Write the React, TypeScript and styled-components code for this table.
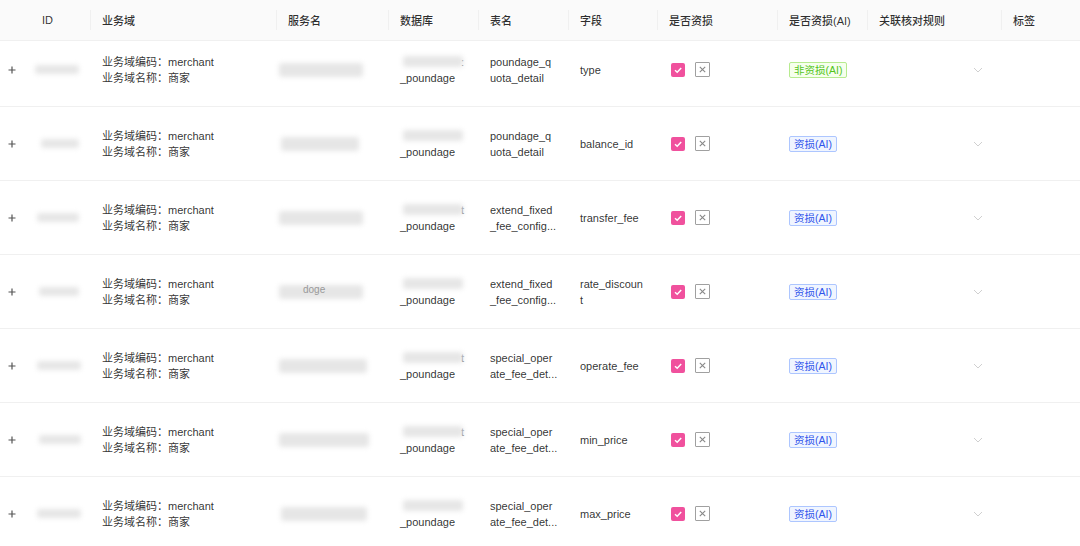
import React from "react";
import styled, { createGlobalStyle } from "styled-components";

const GlobalStyle = createGlobalStyle`
  html, body { margin: 0; padding: 0; background: #fff; }
  body {
    font-family: "Liberation Sans", "Noto Sans CJK SC", sans-serif;
    -webkit-font-smoothing: antialiased;
  }
`;

const COLS = "30px 60px 186px 112px 90px 90px 89px 120px 90px 134px 1fr";

const Table = styled.div`
  width: 1080px;
  overflow: hidden;
  font-size: 11px;
  color: rgba(0, 0, 0, 0.82);
`;

const HeaderRow = styled.div`
  display: grid;
  grid-template-columns: ${COLS};
  height: 41px;
  background: #fafafa;
  border-bottom: 1px solid #f0f0f0;
  box-sizing: border-box;
`;

const Th = styled.div<{ $sep?: boolean }>`
  position: relative;
  display: flex;
  align-items: center;
  padding: 0 12px;
  font-weight: 500;
  white-space: nowrap;
  &::before {
    content: "";
    display: ${(p) => (p.$sep ? "block" : "none")};
    position: absolute;
    left: 0;
    top: 50%;
    width: 1px;
    height: 20px;
    transform: translateY(-50%);
    background: #f0f0f0;
  }
`;

const Row = styled.div<{ $h: number; $shift?: number }>`
  display: grid;
  grid-template-columns: ${COLS};
  height: ${(p) => p.$h}px;
  padding-bottom: ${(p) => p.$shift ?? 0}px;
  border-bottom: 1px solid #f0f0f0;
  box-sizing: border-box;
`;

const Td = styled.div<{ $pad?: number }>`
  display: flex;
  flex-direction: column;
  justify-content: center;
  padding: 0 ${(p) => p.$pad ?? 12}px;
  line-height: 16px;
  white-space: nowrap;
  min-width: 0;
`;

const InlineTd = styled.div`
  display: flex;
  align-items: center;
  padding: 0 14px;
  gap: 10px;
`;

const ExpandCell = styled.div`
  display: flex;
  align-items: center;
  padding-left: 8px;
  color: #555;
`;

const Blur = styled.div<{ $w: number; $h?: number; $dx?: number }>`
  width: ${(p) => p.$w}px;
  height: ${(p) => p.$h ?? 10}px;
  margin-left: ${(p) => p.$dx ?? 0}px;
  background: #e6e6e6;
  filter: blur(2.5px);
  border-radius: 3px;
`;

const DbTop = styled.div`
  display: flex;
  align-items: center;
  height: 16px;
  color: #666;
`;

const Tail = styled.span`
  margin-left: -2px;
  color: #777;
`;

const Faint = styled.span`
  position: relative;
  color: #999;
  font-size: 10px;
  margin-left: -60px;
  top: -2px;
`;

const Checked = styled.span`
  display: inline-flex;
  align-items: center;
  justify-content: center;
  width: 14px;
  height: 14px;
  background: #f0519d;
  border-radius: 2px;
`;

const Crossed = styled.span`
  display: inline-flex;
  align-items: center;
  justify-content: center;
  width: 15px;
  height: 15px;
  box-sizing: border-box;
  border: 1.5px solid #a0a0a0;
  border-radius: 1px;
`;

const Tag = styled.span<{ $tone: "green" | "blue" }>`
  display: inline-block;
  align-self: flex-start;
  height: 16px;
  line-height: 14px;
  padding: 0 4px;
  box-sizing: border-box;
  font-size: 10.5px;
  border-radius: 2px;
  border: 1px solid ${(p) => (p.$tone === "green" ? "#b7eb8f" : "#adc6ff")};
  background: ${(p) => (p.$tone === "green" ? "#f6ffed" : "#f0f5ff")};
  color: ${(p) => (p.$tone === "green" ? "#52c41a" : "#2f54eb")};
`;

const Chevron = styled.div`
  display: flex;
  align-items: center;
  justify-content: flex-end;
  padding-right: 18px;
`;

const Plus = () => (
  <svg width="8" height="8" viewBox="0 0 8 8">
    <path d="M4 0.5V7.5M0.5 4H7.5" stroke="#555" strokeWidth="1.2" />
  </svg>
);

const CheckIcon = () => (
  <svg width="10" height="10" viewBox="0 0 10 10">
    <path d="M2 5.2L4.2 7.2L8.2 3" stroke="#fff" strokeWidth="1.5" fill="none" />
  </svg>
);

const XIcon = () => (
  <svg width="9" height="9" viewBox="0 0 9 9">
    <path d="M1.8 1.8L7.2 7.2M7.2 1.8L1.8 7.2" stroke="#888" strokeWidth="1.1" />
  </svg>
);

const Down = () => (
  <svg width="10" height="6" viewBox="0 0 10 6">
    <path d="M1 1L5 5L9 1" stroke="#d0d0d0" strokeWidth="1" fill="none" />
  </svg>
);

type RowData = {
  table: string[];
  field: string[];
  tag: "green" | "blue";
  idW: number;
  idDx: number;
  svcW: number;
  svcDx: number;
  dbTail?: string;
  svcFaint?: string;
};

const rows: RowData[] = [
  { table: ["poundage_q", "uota_detail"], field: ["type"], tag: "green", idW: 44, idDx: 0, svcW: 84, svcDx: -4, dbTail: ":" },
  { table: ["poundage_q", "uota_detail"], field: ["balance_id"], tag: "blue", idW: 38, idDx: 6, svcW: 78, svcDx: -2 },
  { table: ["extend_fixed", "_fee_config..."], field: ["transfer_fee"], tag: "blue", idW: 42, idDx: 2, svcW: 84, svcDx: -4, dbTail: "t" },
  { table: ["extend_fixed", "_fee_config..."], field: ["rate_discoun", "t"], tag: "blue", idW: 40, idDx: 4, svcW: 84, svcDx: -4, svcFaint: "doge" },
  { table: ["special_oper", "ate_fee_det..."], field: ["operate_fee"], tag: "blue", idW: 44, idDx: 2, svcW: 88, svcDx: -4, dbTail: "t" },
  { table: ["special_oper", "ate_fee_det..."], field: ["min_price"], tag: "blue", idW: 42, idDx: 4, svcW: 90, svcDx: -4, dbTail: "t" },
  { table: ["special_oper", "ate_fee_det..."], field: ["max_price"], tag: "blue", idW: 44, idDx: 2, svcW: 86, svcDx: -2 },
];

const headers = ["", "ID", "业务域", "服务名", "数据库", "表名", "字段", "是否资损", "是否资损(AI)", "关联核对规则", "标签"];

export default function App() {
  return (
    <>
      <GlobalStyle />
      <Table>
        <HeaderRow>
          {headers.map((h, i) => (
            <Th key={i} $sep={i > 1}>
              {h}
            </Th>
          ))}
        </HeaderRow>
        {rows.map((r, i) => (
          <Row key={i} $h={i === 0 ? 66 : 74} $shift={i === 0 ? 8 : 0}>
            <ExpandCell>
              <Plus />
            </ExpandCell>
            <Td $pad={5}>
              <Blur $w={r.idW} $dx={r.idDx} $h={9} />
            </Td>
            <Td>
              <div>业务域编码：merchant</div>
              <div>业务域名称：商家</div>
            </Td>
            <Td $pad={7}>
              <DbTop>
                <Blur $w={r.svcW} $h={14} $dx={r.svcDx} />
                {r.svcFaint && <Faint>{r.svcFaint}</Faint>}
              </DbTop>
            </Td>
            <Td>
              <DbTop>
                <Blur $w={60} $h={11} $dx={3} />
                {r.dbTail && <Tail>{r.dbTail}</Tail>}
              </DbTop>
              <div>_poundage</div>
            </Td>
            <Td>
              {r.table.map((t, j) => (
                <div key={j}>{t}</div>
              ))}
            </Td>
            <Td>
              {r.field.map((t, j) => (
                <div key={j}>{t}</div>
              ))}
            </Td>
            <InlineTd>
              <Checked>
                <CheckIcon />
              </Checked>
              <Crossed>
                <XIcon />
              </Crossed>
            </InlineTd>
            <Td>
              <Tag $tone={r.tag}>{r.tag === "green" ? "非资损(AI)" : "资损(AI)"}</Tag>
            </Td>
            <Chevron>
              <Down />
            </Chevron>
            <Td />
          </Row>
        ))}
      </Table>
    </>
  );
}
